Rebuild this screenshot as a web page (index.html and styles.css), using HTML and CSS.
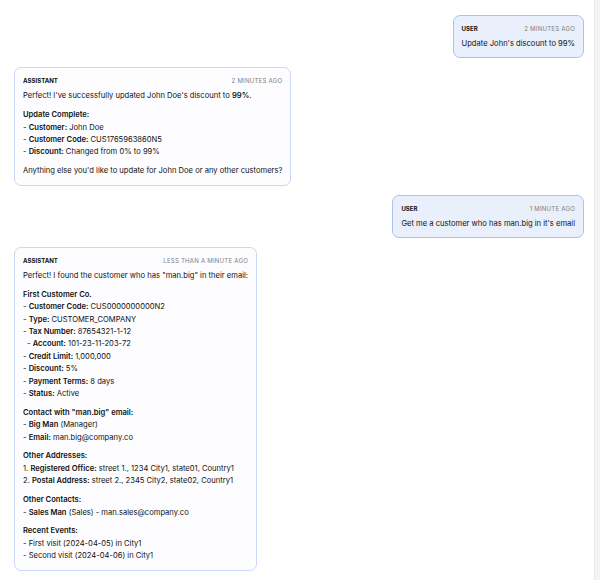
FILE: index.html
```html
<!DOCTYPE html>
<html>
<head>
  <meta charset="UTF-8" />
  <title>Customer Assistant – Chat</title>
  <link rel="stylesheet" href="styles.css">
</head>
<body>

<div class="page">
  <div class="chat">

    <div class="msg user">
      <div class="msg-head">
        <span class="role">User</span>
        <span class="time">2 minutes ago</span>
      </div>
      <p>Update John's discount to 99%</p>
    </div>

    <div class="msg assistant">
      <div class="msg-head">
        <span class="role">Assistant</span>
        <span class="time">2 minutes ago</span>
      </div>
      <p>Perfect! I've successfully updated John Doe's discount to <b>99%</b>.</p>
      <p>
        <b>Update Complete:</b><br>
        - <b>Customer:</b> John Doe<br>
        - <b>Customer Code:</b> CUS1765963860N5<br>
        - <b>Discount:</b> Changed from 0% to 99%
      </p>
      <p>Anything else you'd like to update for John Doe or any other customers?</p>
    </div>

    <div class="msg user">
      <div class="msg-head">
        <span class="role">User</span>
        <span class="time">1 minute ago</span>
      </div>
      <p>Get me a customer who has man.big in it's email</p>
    </div>

    <div class="msg assistant">
      <div class="msg-head">
        <span class="role">Assistant</span>
        <span class="time">less than a minute ago</span>
      </div>
      <p>Perfect! I found the customer who has "man.big" in their email:</p>
      <p>
        <b>First Customer Co.</b><br>
        - <b>Customer Code:</b> CUS0000000000N2<br>
        - <b>Type:</b> CUSTOMER_COMPANY<br>
        - <b>Tax Number:</b> 87654321-1-12<br>
        <span class="indent">- <b>Account:</b> 101-23-11-203-72</span><br>
        - <b>Credit Limit:</b> 1,000,000<br>
        - <b>Discount:</b> 5%<br>
        - <b>Payment Terms:</b> 8 days<br>
        - <b>Status:</b> Active
      </p>
      <p>
        <b>Contact with "man.big" email:</b><br>
        - <b>Big Man</b> (Manager)<br>
        - <b>Email:</b> man.big@company.co
      </p>
      <p>
        <b>Other Addresses:</b><br>
        1. <b>Registered Office:</b> street 1., 1234 City1, state01, Country1<br>
        2. <b>Postal Address:</b> street 2., 2345 City2, state02, Country1
      </p>
      <p>
        <b>Other Contacts:</b><br>
        - <b>Sales Man</b> (Sales) - man.sales@company.co
      </p>
      <p>
        <b>Recent Events:</b><br>
        - First visit (2024-04-05) in City1<br>
        - Second visit (2024-04-06) in City1
      </p>
    </div>

  </div>
  <div class="scroll-track"></div>
</div>

</body>
</html>
```

FILE: styles.css
```css
html, body {
  margin: 0;
  padding: 0;
  background-color: #ffffff;
  font-family: Inter, 'Noto Sans', sans-serif;
  color: #111111;
}
.page {
  display: flex;
  height: 100vh;
  overflow: hidden;
}
.chat {
  flex: 1;
  display: flex;
  flex-direction: column;
  align-items: flex-start;
  gap: 9px;
  padding: 15px 10px 0 14px;
}
.scroll-track {
  width: 5px;
  background-color: #f3f3f3;
  border-left: 1px solid #e6e6e6;
}
.msg {
  box-sizing: border-box;
  padding: 8px 8px 7px 8px;
  border-radius: 7px;
  font-size: 7.6px;
  line-height: 12.4px;
}
.user {
  align-self: flex-end;
  background-color: #e9effb;
  border: 1px solid #a9c3ef;
}
.assistant {
  background-color: #fdfdff;
  border: 1px solid #c9d8f3;
}
.msg-head {
  display: flex;
  justify-content: space-between;
  gap: 20px;
  font-size: 6.1px;
  line-height: 10px;
  text-transform: uppercase;
  margin-bottom: 4px;
}
.role {
  font-weight: 700;
}
.time {
  color: #808080;
  letter-spacing: 0.2px;
}
.msg p {
  margin: 0 0 6.4px 0;
}
.msg p:last-child {
  margin-bottom: 0;
}
b {
  font-weight: 600;
}
.indent {
  padding-left: 4px;
}
```
